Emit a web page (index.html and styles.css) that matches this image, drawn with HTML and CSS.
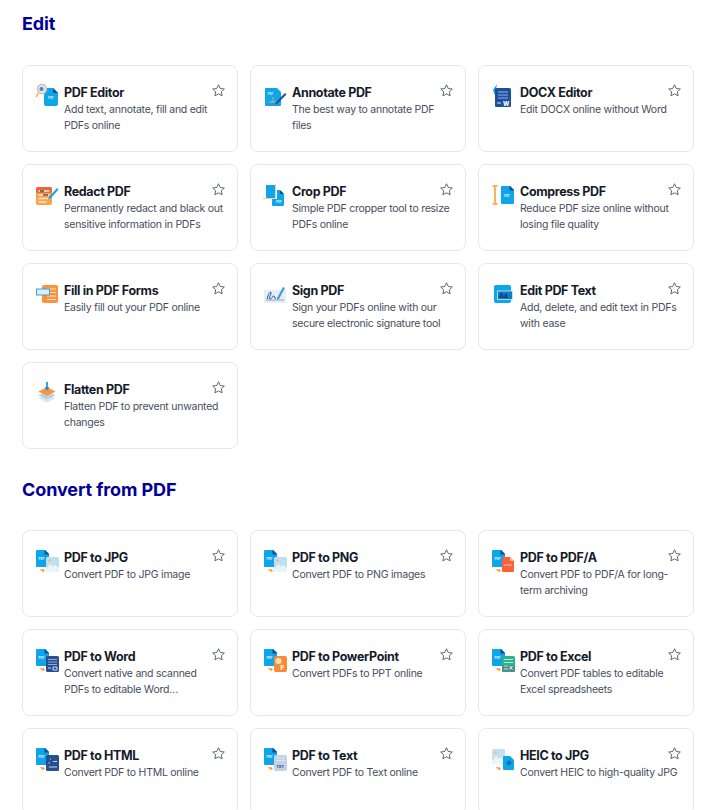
FILE: index.html
```html
<!DOCTYPE html>
<html lang="en">
<head>
    <meta charset="UTF-8">
    <meta name="viewport" content="width=device-width, initial-scale=1.0">
    <title>PDF Tools</title>
    <link rel="stylesheet" href="styles.css">
</head>
<body>
    <svg class="defs" width="0" height="0">
        <defs>
            <g id="pdf">
                <path d="M2 0h8l4 4v12a1 1 0 0 1-1 1H2a1 1 0 0 1-1-1V1a1 1 0 0 1 1-1z" fill="#0ea5e9"/>
                <path d="M9.500 0H10l4 4v.5H9.500z" fill="#0b4f9e"/>
                <text x="3.600" y="9.500" font-size="3" font-weight="700" fill="#e0f4ff" font-family="Inter, sans-serif">PDF</text>
            </g>
            <g id="arrow">
                <path d="M5.500 19c.6 1.200 1.600 1.700 3.500 1.600M7.600 19.200l1.500 1.400-1.600 1.200" fill="none" stroke="#f99a3c" stroke-width="1.200"/>
            </g>
            <g id="picture">
                <rect x="11" y="7" width="13" height="15" rx="1.500" fill="#bfe0f2"/>
                <circle cx="14.500" cy="10.500" r="1.300" fill="#fbbf5d"/>
                <path d="M11 19l4-5 3 2.500 2-1.500 4 3v2.500a1.500 1.500 0 0 1-1.500 1.500h-10A1.500 1.500 0 0 1 11 20.500z" fill="#e8f5fb"/>
            </g>
            <path id="star-shape" d="M12 2.800l2.800 6 6.500.8-4.800 4.400 1.300 6.500-5.800-3.200-5.800 3.200 1.300-6.500L2.700 9.600l6.500-.8z"/>
        </defs>
    </svg>

    <h2 class="section-title">Edit</h2>
    <div class="grid">
        <div class="card">
            <svg class="icon" viewBox="0 2 24 24">
                <path d="M9 5h9l5 5v11a2 2 0 0 1-2 2H11a2 2 0 0 1-2-2z" fill="#0ea5e9"/>
                <path d="M18 5l5 5h-5z" fill="#0b4f9e"/>
                <text x="13" y="16" font-size="3" font-weight="700" fill="#d5f0ff" font-family="Inter, sans-serif">PDF</text>
                <circle cx="7" cy="6" r="4.600" fill="#cfe9f7" stroke="#f9b27a" stroke-width="1.200"/>
                <circle cx="6.500" cy="6" r="2" fill="#2b8fd1"/>
                <path d="M3.500 10L1 14" stroke="#f9b27a" stroke-width="1.600" fill="none"/>
            </svg>
            <div class="card-body">
                <div class="card-title">PDF Editor</div>
                <div class="card-desc">Add text, annotate, fill and edit PDFs online</div>
            </div>
            <svg class="star" viewBox="0 0 24 24"><use href="#star-shape"/></svg>
        </div>
        <div class="card">
            <svg class="icon" viewBox="0 2 24 24">
                <path d="M3 5h11l4 4v13a1 1 0 0 1-1 1H3a1 1 0 0 1-1-1V6a1 1 0 0 1 1-1z" fill="#0ea5e9"/>
                <text x="4.500" y="12" font-size="3" font-weight="700" fill="#d5f0ff" font-family="Inter, sans-serif">PDF</text>
                <path d="M6 19h9M10 14v4c0 1-1 1.500-2 1" stroke="#f3b35f" stroke-width=".8" fill="none"/>
                <path d="M13 19l9-9 1.500 1.500-9 9-2.500 1z" fill="#1f4e9c"/>
            </svg>
            <div class="card-body">
                <div class="card-title">Annotate PDF</div>
                <div class="card-desc">The best way to annotate PDF files</div>
            </div>
            <svg class="star" viewBox="0 0 24 24"><use href="#star-shape"/></svg>
        </div>
        <div class="card">
            <svg class="icon" viewBox="2 2 24 24">
                <path d="M4 7l4-6-1 5 2 1-3 5z" fill="#0ea5e9"/>
                <rect x="6" y="5" width="16" height="19" rx="1.500" fill="#1f4e9c"/>
                <path d="M9 9h10M9 12h10M9 15h10" stroke="#8fb2df" stroke-width="1"/>
                <text x="14" y="22.500" font-size="6" font-weight="800" fill="#fff" font-family="Inter, sans-serif">W</text>
                <path d="M8 20h4" stroke="#dbeafe" stroke-width="1"/>
            </svg>
            <div class="card-body">
                <div class="card-title">DOCX Editor</div>
                <div class="card-desc">Edit DOCX online without Word</div>
            </div>
            <svg class="star" viewBox="0 0 24 24"><use href="#star-shape"/></svg>
        </div>
        <div class="card">
            <svg class="icon" viewBox="0 2 24 24">
                <rect x="1" y="5" width="16" height="18" rx="2" fill="#fba04c"/>
                <rect x="1" y="5" width="16" height="6" rx="2" fill="#f0643c"/>
                <path d="M3.500 9h11M3.500 13h11M3.500 16.500h11M3.500 20h8" stroke="#fde6c8" stroke-width="1.300"/>
                <path d="M5 9h4M8 13h5" stroke="#475569" stroke-width="1.300"/>
                <path d="M14 15l8-9 1.500 1.500-8 9-2.500 1z" fill="#0ea5e9"/>
            </svg>
            <div class="card-body">
                <div class="card-title">Redact PDF</div>
                <div class="card-desc">Permanently redact and black out sensitive information in PDFs</div>
            </div>
            <svg class="star" viewBox="0 0 24 24"><use href="#star-shape"/></svg>
        </div>
        <div class="card">
            <svg class="icon" viewBox="0 0 24 24">
                <rect x="3" y="1" width="9" height="13" fill="#0ea5e9"/>
                <path d="M0 14.500h13M12.500 0v16" stroke="#fbcf9a" stroke-width="1"/>
                <path d="M14 6h3l4 4v11a1 1 0 0 1-1 1H10a1 1 0 0 1-1-1v-6h5z" fill="#0ea5e9"/>
                <path d="M17 6l4 4h-4z" fill="#0b4f9e"/>
                <text x="13" y="19" font-size="3" font-weight="700" fill="#d5f0ff" font-family="Inter, sans-serif">PDF</text>
            </svg>
            <div class="card-body">
                <div class="card-title">Crop PDF</div>
                <div class="card-desc">Simple PDF cropper tool to resize PDFs online</div>
            </div>
            <svg class="star" viewBox="0 0 24 24"><use href="#star-shape"/></svg>
        </div>
        <div class="card">
            <svg class="icon" viewBox="0 2 24 24">
                <path d="M1.500 4h5M1.500 22h5M4 4v18" stroke="#fbb35f" stroke-width="2" fill="none"/>
                <path d="M11 4h8l4 4v13a1 1 0 0 1-1 1H11a1 1 0 0 1-1-1V5a1 1 0 0 1 1-1z" fill="#0ea5e9"/>
                <path d="M18.500 4h.5l4 4v.5h-4.500z" fill="#0b4f9e"/>
                <text x="13" y="14.500" font-size="3" font-weight="700" fill="#d5f0ff" font-family="Inter, sans-serif">PDF</text>
            </svg>
            <div class="card-body">
                <div class="card-title">Compress PDF</div>
                <div class="card-desc">Reduce PDF size online without losing file quality</div>
            </div>
            <svg class="star" viewBox="0 0 24 24"><use href="#star-shape"/></svg>
        </div>
        <div class="card">
            <svg class="icon" viewBox="0 1 24 24">
                <rect x="7" y="3" width="16" height="18" rx="2" fill="#fb923c"/>
                <path d="M12 7h9M12 10.500h9M12 14h9M12 17.500h9" stroke="#fde6c8" stroke-width="1.200"/>
                <rect x="1.500" y="7" width="13" height="6" fill="#dbeefa" stroke="#3b9fdc" stroke-width="1"/>
            </svg>
            <div class="card-body">
                <div class="card-title">Fill in PDF Forms</div>
                <div class="card-desc">Easily fill out your PDF online</div>
            </div>
            <svg class="star" viewBox="0 0 24 24"><use href="#star-shape"/></svg>
        </div>
        <div class="card">
            <svg class="icon" viewBox="0 2 24 24">
                <rect x="1" y="9" width="22" height="13" fill="#e6eff7"/>
                <path d="M3 19h18" stroke="#7b93b5" stroke-width=".8"/>
                <path d="M4 18c2-7 4-8 4-6s-3 6-1 6 3-4 4-3 0 3 2 2" fill="none" stroke="#1f4e9c" stroke-width="1"/>
                <path d="M14 17l6-11 2 1-6 11-2 1z" fill="#3b9fdc"/>
            </svg>
            <div class="card-body">
                <div class="card-title">Sign PDF</div>
                <div class="card-desc">Sign your PDFs online with our secure electronic signature tool</div>
            </div>
            <svg class="star" viewBox="0 0 24 24"><use href="#star-shape"/></svg>
        </div>
        <div class="card">
            <svg class="icon" viewBox="-2 2 24 24">
                <rect x="1" y="4" width="17" height="18" rx="2" fill="#0ea5e9"/>
                <rect x="4.500" y="10" width="15" height="8.500" fill="#0c7fc4" stroke="#d3ecfa" stroke-width=".8"/>
                <text x="6" y="17" font-size="6.500" font-weight="800" fill="#123a75" font-family="Inter, sans-serif">Aa</text>
            </svg>
            <div class="card-body">
                <div class="card-title">Edit PDF Text</div>
                <div class="card-desc">Add, delete, and edit text in PDFs with ease</div>
            </div>
            <svg class="star" viewBox="0 0 24 24"><use href="#star-shape"/></svg>
        </div>
        <div class="card">
            <svg class="icon" viewBox="-2 0 28 28">
                <path d="M12 14l10 5-10 5-10-5z" fill="#dbe6ef"/>
                <path d="M12 10.500l10 5-10 5-10-5z" fill="#b9d0e2"/>
                <path d="M12 6l10 5-10 5-10-5z" fill="#fb923c"/>
                <path d="M11 0h2v6h2l-3 4-3-4h2z" fill="#1d8fd8"/>
            </svg>
            <div class="card-body">
                <div class="card-title">Flatten PDF</div>
                <div class="card-desc">Flatten PDF to prevent unwanted changes</div>
            </div>
            <svg class="star" viewBox="0 0 24 24"><use href="#star-shape"/></svg>
        </div>
    </div>

    <h2 class="section-title">Convert from PDF</h2>
    <div class="grid">
        <div class="card">
            <svg class="icon" viewBox="0 0 24 24"><use href="#pdf"/><use href="#arrow"/><use href="#picture"/></svg>
            <div class="card-body">
                <div class="card-title">PDF to JPG</div>
                <div class="card-desc">Convert PDF to JPG image</div>
            </div>
            <svg class="star" viewBox="0 0 24 24"><use href="#star-shape"/></svg>
        </div>
        <div class="card">
            <svg class="icon" viewBox="0 0 24 24"><use href="#pdf"/><use href="#arrow"/><use href="#picture"/></svg>
            <div class="card-body">
                <div class="card-title">PDF to PNG</div>
                <div class="card-desc">Convert PDF to PNG images</div>
            </div>
            <svg class="star" viewBox="0 0 24 24"><use href="#star-shape"/></svg>
        </div>
        <div class="card">
            <svg class="icon" viewBox="0 0 24 24">
                <use href="#pdf"/><use href="#arrow"/>
                <path d="M12 7h7l4 4v10a1 1 0 0 1-1 1H12a1 1 0 0 1-1-1V8a1 1 0 0 1 1-1z" fill="#f9603c"/>
                <path d="M19 7l4 4h-4z" fill="#fbb98f"/>
                <path d="M13 15h8" stroke="#ffe5d8" stroke-width="1.200" stroke-dasharray="1.300 .5"/>
            </svg>
            <div class="card-body">
                <div class="card-title">PDF to PDF/A</div>
                <div class="card-desc">Convert PDF to PDF/A for long-term archiving</div>
            </div>
            <svg class="star" viewBox="0 0 24 24"><use href="#star-shape"/></svg>
        </div>
        <div class="card">
            <svg class="icon" viewBox="0 0 24 24">
                <use href="#pdf"/><use href="#arrow"/>
                <rect x="11" y="7" width="13" height="16" rx="1.500" fill="#274e92"/>
                <path d="M13 10.500h9M13 13h9M13 15.500h9" stroke="#a9c1e3" stroke-width=".8"/>
                <path d="M13 19h3M18 18h4v3h-4z" stroke="#e2ecf8" stroke-width=".9" fill="none"/>
            </svg>
            <div class="card-body">
                <div class="card-title">PDF to Word</div>
                <div class="card-desc">Convert native and scanned<br>PDFs to editable Word…</div>
            </div>
            <svg class="star" viewBox="0 0 24 24"><use href="#star-shape"/></svg>
        </div>
        <div class="card">
            <svg class="icon" viewBox="0 0 24 24">
                <use href="#pdf"/><use href="#arrow"/>
                <rect x="11" y="7" width="13" height="16" rx="2" fill="#fb8a34"/>
                <circle cx="15.500" cy="12" r="3" fill="#ffe3c4"/>
                <text x="17.500" y="21" font-size="5.500" font-weight="800" fill="#fff" font-family="Inter, sans-serif">P</text>
            </svg>
            <div class="card-body">
                <div class="card-title">PDF to PowerPoint</div>
                <div class="card-desc">Convert PDFs to PPT online</div>
            </div>
            <svg class="star" viewBox="0 0 24 24"><use href="#star-shape"/></svg>
        </div>
        <div class="card">
            <svg class="icon" viewBox="0 0 24 24">
                <use href="#pdf"/><use href="#arrow"/>
                <rect x="11" y="7" width="13" height="16" rx="1.500" fill="#2bb58a"/>
                <rect x="11" y="16" width="13" height="7" rx="1.500" fill="#4d8f8a"/>
                <path d="M13 10.500h9M13 13.500h9M13 17h4M13 20h4" stroke="#d6f3e8" stroke-width=".8"/>
                <path d="M18.500 17l3 3.500m0-3.500l-3 3.500" stroke="#fff" stroke-width=".9"/>
            </svg>
            <div class="card-body">
                <div class="card-title">PDF to Excel</div>
                <div class="card-desc">Convert PDF tables to editable Excel spreadsheets</div>
            </div>
            <svg class="star" viewBox="0 0 24 24"><use href="#star-shape"/></svg>
        </div>
        <div class="card">
            <svg class="icon" viewBox="0 0 24 24">
                <use href="#pdf"/><use href="#arrow"/>
                <rect x="11" y="7" width="13" height="16" rx="1.500" fill="#274e92"/>
                <path d="M15 11h1M18 13.500h4M13.500 15h1.500M14 19h8" stroke="#dbe7f6" stroke-width=".9"/>
            </svg>
            <div class="card-body">
                <div class="card-title">PDF to HTML</div>
                <div class="card-desc">Convert PDF to HTML online</div>
            </div>
            <svg class="star" viewBox="0 0 24 24"><use href="#star-shape"/></svg>
        </div>
        <div class="card">
            <svg class="icon" viewBox="0 0 24 24">
                <use href="#pdf"/><use href="#arrow"/>
                <rect x="11" y="7" width="13" height="16" rx="1.500" fill="#c3d3e2"/>
                <path d="M13 10h9M13 12.500h9" stroke="#e6eef5" stroke-width=".8"/>
                <text x="13.500" y="20" font-size="3.500" font-weight="800" fill="#274e92" font-family="Inter, sans-serif">TXT</text>
            </svg>
            <div class="card-body">
                <div class="card-title">PDF to Text</div>
                <div class="card-desc">Convert PDF to Text online</div>
            </div>
            <svg class="star" viewBox="0 0 24 24"><use href="#star-shape"/></svg>
        </div>
        <div class="card">
            <svg class="icon" viewBox="0 0 24 24">
                <rect x="1" y="1" width="13" height="15" rx="1.500" fill="#bfe0f2"/>
                <circle cx="4.500" cy="4.500" r="1.300" fill="#fbbf5d"/>
                <path d="M1 13l4-5 3 2.500 2-1.500 4 4v3H1z" fill="#e8f5fb"/>
                <use href="#arrow"/>
                <path d="M13 8h6l4 4v9a1 1 0 0 1-1 1H13a1 1 0 0 1-1-1V9a1 1 0 0 1 1-1z" fill="#0ea5e9"/>
                <path d="M15 15l3-3 3 3-3 3z" fill="#0b78c2"/>
            </svg>
            <div class="card-body">
                <div class="card-title">HEIC to JPG</div>
                <div class="card-desc">Convert HEIC to high-quality JPG</div>
            </div>
            <svg class="star" viewBox="0 0 24 24"><use href="#star-shape"/></svg>
        </div>
    </div>
</body>
</html>
```

FILE: styles.css
```css
html, body {
    height: 810px;
    overflow: hidden;
}
body {
    font-family: 'Inter', 'Liberation Sans', sans-serif;
    background-color: #fff;
    margin: 0;
    padding: 0 14px 0 22px;
}
.defs {
    position: absolute;
}
.section-title {
    color: #000099;
    font-size: 18px;
    line-height: 24px;
    font-weight: 700;
    letter-spacing: -0.1px;
    margin: 0;
    padding: 12px 0 29px;
}
.grid + .section-title {
    padding: 29px 0 28px;
}
.grid {
    display: grid;
    grid-template-columns: repeat(3, 1fr);
    grid-auto-rows: 87px;
    gap: 12px;
}
.card {
    position: relative;
    display: flex;
    gap: 5px;
    background-color: #fff;
    border: 1px solid #e3e7f0;
    border-radius: 8px;
    padding: 19px 11px 0 12px;
}
.icon {
    flex: none;
    width: 24px;
    height: 24px;
    overflow: visible;
}
.card-body {
    min-width: 0;
}
.card-title {
    color: #161b2b;
    font-size: 12.5px;
    line-height: 16px;
    font-weight: 700;
    letter-spacing: -0.35px;
}
.card-desc {
    color: #474d5c;
    font-size: 10.5px;
    line-height: 16px;
    letter-spacing: -0.25px;
    margin-top: 1px;
}
.star {
    position: absolute;
    top: 17px;
    right: 11px;
    width: 15px;
    height: 15px;
    fill: none;
    stroke: #5f6675;
    stroke-width: 1.600;
    stroke-linejoin: round;
}
```
